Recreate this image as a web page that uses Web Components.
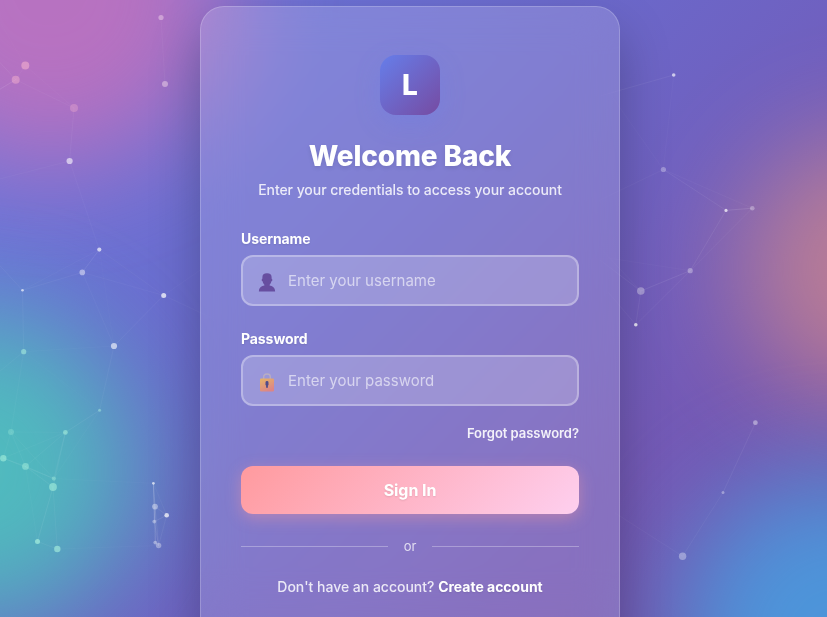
<!DOCTYPE html>
<html lang="en">
<head>
<meta charset="utf-8">
<title>Sign In</title>
<style>
html,body{margin:0;height:100%;overflow:hidden}
body{font-family:Inter,"Liberation Sans",sans-serif;background:#6a68c8;color:#fff}
</style>
</head>
<body>
<login-page></login-page>
<script>
const define=(name,html,setup)=>customElements.define(name,class extends HTMLElement{
  constructor(){
    super();
    this.attachShadow({mode:'open'});
  }
  connectedCallback(){
    if(this.shadowRoot.childNodes.length)return;
    const t=document.createElement('template');
    t.innerHTML=html;
    this.shadowRoot.append(t.content.cloneNode(true));
    if(setup)setup(this.shadowRoot,this);
  }
});

/* Particles: x, y, radius, opacity */
const dots=[[161,17.5,2.6,.45],[165,84,3,.5],[25.3,65.5,4,.5],[15.7,79.7,4,.42],[74,108,4,.3],[69.6,161,3.1,.58],
[99.3,249.6,2.1,.66],[82.3,272.4,2.8,.45],[22.5,290.3,1.3,.65],[163.7,295.4,2.5,.75],[114,346,3.1,.6],[23.7,351.7,2.6,.5],
[99.6,410.3,1.5,.42],[65.4,432.4,2.4,.5],[11,432,3,.25],[3.3,458.2,3.2,.5],[25.5,466.4,3.4,.42],[53.8,478.6,2.1,.35],
[53,487,3.9,.5],[37.5,541.5,2.5,.6],[57.3,549,3.2,.55],[153.4,483.3,1.4,.65],[155,506.6,2.9,.4],[166.7,515.2,2.3,.75],
[154.3,521.6,1.9,.35],[155.3,542.6,1.9,.38],[158.6,545.5,2.7,.35],
[673.7,75,1.8,.65],[663.4,169.5,2.6,.3],[726,210.4,1.6,.7],[752.3,208.2,2.3,.3],[690.2,270.7,2.6,.32],[640.8,291,3.8,.35],
[635.8,324.7,1.8,.8],[755.4,422.7,2.4,.4],[723,492.5,1.5,.35],[682.6,556.2,3.7,.34]];
const links=[[0,1,.06],[2,3,.05],[2,4,.04],[3,4,.06],[4,5,.07],[5,6,.05],[6,7,.13],[6,8,.05],[7,8,.07],[6,9,.06],[7,9,.05],[7,10,.05],[9,10,.07],
[8,11,.07],[10,11,.03],[10,12,.07],[11,14,.05],[11,12,.02],[12,13,.1],[13,15,.05],[13,16,.07],[13,17,.08],[13,18,.08],[14,15,.05],[14,16,.06],[14,17,.06],[14,13,.04],
[15,16,.1],[16,17,.1],[16,18,.1],[15,17,.07],[18,19,.12],[18,20,.08],[19,20,.08],[16,19,.04],[12,17,.04],[17,21,.03],[20,26,.03],
[21,22,.2],[21,24,.18],[21,25,.1],[21,23,.07],[22,23,.13],[22,24,.18],[23,24,.15],[22,25,.2],[22,26,.13],[23,26,.1],[24,26,.13],[25,26,.15],
[27,28,.04],[28,29,.1],[28,30,.05],[29,30,.17],[29,31,.12],[30,31,.07],[31,32,.13],[32,33,.1],[31,33,.08],[34,35,.1],[35,36,.08]];
const loose=[[673.7,75,600,96,.1],[663.4,169.5,600,200,.06],[663.4,169.5,606,88,.04],[640.8,291,600,260,.1],[640.8,291,600,248,.05],[635.8,324.7,608,292,.07],
[682.6,556.2,615,513,.06],[15.7,79.7,-8,94,.16],[15.7,79.7,-5,57,.1],[69.6,161,-8,181,.06],[22.5,290.3,-8,257,.08],[163.7,295.4,212,318,.06],[163.7,295.4,212,262,.04],
[23.7,351.7,-6,376,.06],[99.3,249.6,114,346,.03],[25.3,65.5,0,22,.03],[690.2,270.7,608,258,.04]];

define('particle-field',`<style>:host{display:block}svg{display:block;width:100%;height:100%}</style><svg viewBox="0 0 827 617" preserveAspectRatio="xMinYMin slice"></svg>`,root=>{
  const line=(a,b,c,d,o)=>`<line x1="${a}" y1="${b}" x2="${c}" y2="${d}" stroke="#fff" stroke-opacity="${(o*.6).toFixed(3)}"/>`;
  const tint=(x,y)=>x<110&&y>340?'#b4fbe2':x<80&&y<120?'#ffb9cf':x<170&&y<90?'#f6dcee':'#fff';
  root.querySelector('svg').innerHTML=
    links.map(([i,j,o])=>line(dots[i][0],dots[i][1],dots[j][0],dots[j][1],o)).join('')+
    loose.map(l=>line(...l)).join('')+
    dots.map(([x,y,r,o])=>`<circle cx="${x}" cy="${y}" r="${r}" fill="${tint(x,y)}" fill-opacity="${o}"/>`).join('');
});

define('glow-backdrop',`<style>
:host{display:block;overflow:hidden;background:linear-gradient(135deg,#6b7ade 0%,#6b68ca 42%,#7655b0 85%,#764ba2 100%)}
i{position:absolute;border-radius:50%;filter:blur(55px)}
.pink{width:360px;height:360px;left:-130px;top:-190px;background:#d870b6;opacity:.7}
.teal{width:315px;height:315px;left:-180px;top:312px;background:#46d8b8;opacity:.72}
.peach{width:264px;height:264px;left:740px;top:136px;background:#f29a7c;opacity:.55}
.blue{width:335px;height:335px;left:672px;top:472px;background:#3eb0ee;opacity:.73}
</style><i class="pink"></i><i class="teal"></i><i class="peach"></i><i class="blue"></i>`);

define('glass-card',`<style>
:host{display:block;box-sizing:border-box;width:420px;height:641px;padding:48px 40px;border:1px solid rgba(255,255,255,.2);border-radius:24px;
background:rgba(255,255,255,.15);-webkit-backdrop-filter:blur(20px);backdrop-filter:blur(20px);box-shadow:0 25px 50px rgba(0,0,0,.25)}
</style><slot></slot>`);

define('brand-header',`<style>
:host{display:flex;flex-direction:column;align-items:center;text-align:center}
.logo{width:60px;height:60px;border-radius:16px;display:grid;place-items:center;font-size:28px;font-weight:780;background:linear-gradient(135deg,#667eea,#764ba2);box-shadow:0 8px 25px rgba(102,126,234,.3)}
h1{margin:24px 0 8px;font-size:28px;line-height:34px;font-weight:780;letter-spacing:-.13px;text-shadow:0 2px 4px rgba(0,0,0,.1)}
p{margin:0;font-size:14px;line-height:17px;font-weight:450;letter-spacing:-.06px;color:rgba(255,255,255,.84)}
</style><div class="logo">L</div><h1><slot name="title"></slot></h1><p><slot></slot></p>`);

const icons={
user:`<g fill="#57358c"><path d="M4.4 4.2Q4.3.2 9 .2t4.6 4v1.5l.6.3v2l-.8.3Q12.8 12 9 12.6 5.2 12 4.6 8.3L3.8 8V6l.6-.3z"/><path d="M6.4 10h5.2v2.6c2.7.7 5.1 1.6 5.5 5.4v.6H.9V18c.4-3.8 2.8-4.7 5.5-5.4z"/></g>`,
lock:`<defs><linearGradient id="g" x2=".5" y2="1"><stop stop-color="#ffbe3e"/><stop offset="1" stop-color="#f3806a"/></linearGradient></defs><path d="M5.7 6V3.7q0-2.7 3.3-2.7t3.3 2.7V6" fill="none" stroke="#c3b4bc" stroke-width="1.4"/><rect x="2" y="5.4" width="14" height="13.1" rx="1.3" fill="url(#g)"/><path d="M7.5 9.4Q7.5 8 9 8t1.5 1.4v2.5l-.6.6v2.2H8.1v-2.2l-.6-.6z" fill="#36316f"/>`};
define('text-field',`<style>
:host{display:block;margin-bottom:24px}
label{display:block;font-size:14px;line-height:17px;font-weight:660;letter-spacing:-.08px;margin-bottom:8px;text-shadow:0 1px 2px rgba(0,0,0,.1)}
.box{box-sizing:border-box;height:51px;border:2px solid rgba(255,255,255,.3);border-radius:12px;background:rgba(255,255,255,.2);display:flex;align-items:center;gap:12px;padding:0 16px 0 15px}
svg{width:18px;height:19px;opacity:.75;flex:none;margin-top:3px}
span{font-size:15px;line-height:20px;font-weight:440;margin-top:1px;color:rgba(255,255,255,.6)}
</style><label><slot></slot></label><div class="box"><svg viewBox="0 0 18 19"></svg><span></span></div>`,(root,el)=>{
  root.querySelector('svg').innerHTML=icons[el.getAttribute('icon')];
  root.querySelector('span').textContent=el.getAttribute('placeholder');
});

define('text-link',`<style>:host{display:block;text-align:right;font-size:13px;line-height:17px;font-weight:580;letter-spacing:-.03px;color:rgba(255,255,255,.9)}</style><slot></slot>`);

define('submit-button',`<style>
:host{display:block}
button{display:block;width:100%;height:48px;border:0;padding:0;border-radius:12px;font:660 16px/20px Inter,"Liberation Sans",sans-serif;letter-spacing:-.08px;color:#fff;text-shadow:0 1px 2px rgba(0,0,0,.1);background:linear-gradient(135deg,#ff9a9e 0%,#fecfef 100%);box-shadow:0 4px 15px rgba(255,154,158,.4)}
</style><button><slot></slot></button>`);

define('or-divider',`<style>
:host{display:flex;align-items:center;gap:16px;font-size:13px;line-height:17px;font-weight:430;letter-spacing:-.2px;color:rgba(255,255,255,.75)}
:host::before,:host::after{content:"";height:1px;flex:1;background:rgba(255,255,255,.3)}
</style><slot></slot>`);

define('signup-note',`<style>:host{display:block;text-align:center;font-size:14px;line-height:17px;font-weight:450;letter-spacing:-.01px;color:rgba(255,255,255,.84)}
::slotted(b){font-weight:650;color:#fff;text-shadow:0 1px 2px rgba(0,0,0,.1)}</style><slot></slot>`);

define('login-page',`<style>
:host{display:grid;position:relative;width:827px;height:617px;overflow:hidden}
glow-backdrop,particle-field{position:absolute;inset:0}
glass-card{position:relative;margin:6px 0 0 200px}
brand-header{margin-bottom:32px}
text-link{margin:-5px 0 24px}
or-divider{margin:24px 0 23px}
</style>
<glow-backdrop></glow-backdrop><particle-field></particle-field>
<glass-card>
<brand-header><span slot="title">Welcome Back</span>Enter your credentials to access your account</brand-header>
<text-field icon="user" placeholder="Enter your username">Username</text-field>
<text-field icon="lock" placeholder="Enter your password">Password</text-field>
<text-link>Forgot password?</text-link>
<submit-button>Sign In</submit-button>
<or-divider>or</or-divider>
<signup-note>Don't have an account? <b>Create account</b></signup-note>
</glass-card>`);
</script>
</body>
</html>
